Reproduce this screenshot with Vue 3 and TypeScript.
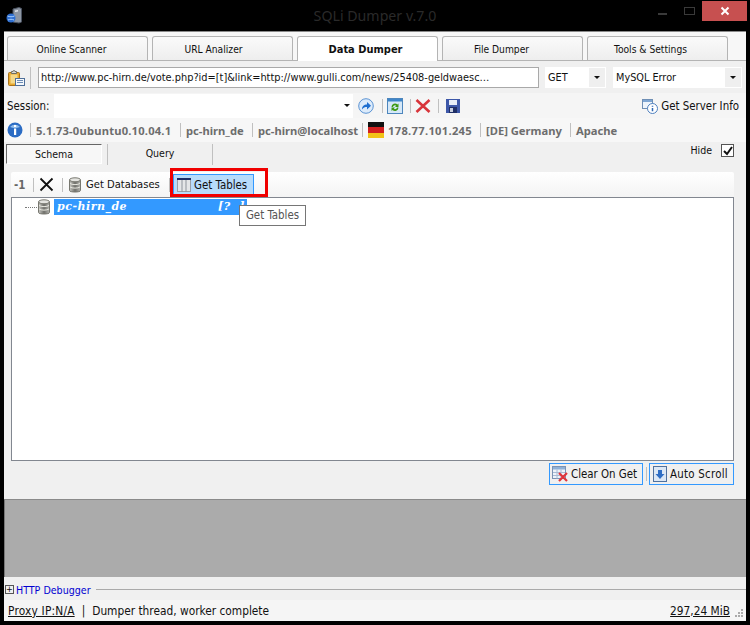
<script setup lang="ts">
const tabs = [
  { label: 'Online Scanner', active: false, shift: 12 },
  { label: 'URL Analizer', active: false, shift: 18 },
  { label: 'Data Dumper', active: true, shift: 4 },
  { label: 'File Dumper', active: false, shift: 22 },
  { label: 'Tools & Settings', active: false, shift: 14 },
]
</script>

<template>
  <div class="window">
    <header class="titlebar">
      <div class="tb-left">
        <svg class="app-icon" width="18" height="18" viewBox="0 0 18 18">
          <path d="M8 3l6-1.500 2.500 1V16l-2.500 1-6-1z" fill="#8d96a3" stroke="#4a5260" />
          <path d="M10 4.500l3-.6v1.500l-3 .6z" fill="#dfe4ea" />
          <circle cx="6" cy="12" r="4.500" fill="#2f6fd0" />
          <path d="M2.500 10c2 1 5 1 7 0M3 14c2-1 4-1 6 0" stroke="#a8d0ff" fill="none" />
        </svg>
      </div>
      <div class="title">SQLi Dumper v.7.0</div>
      <div class="controls">
        <span class="min"></span>
        <span class="max"></span>
        <span class="close">
          <svg width="10" height="10" viewBox="0 0 10 10"><path d="M1.500 1.500l7 7M8.500 1.500l-7 7" stroke="#fff" stroke-width="2" /></svg>
        </span>
      </div>
    </header>

    <main class="client">
      <nav class="tabs">
        <div
          v-for="t in tabs"
          :key="t.label"
          class="tab"
          :class="{ active: t.active }"
          :style="{ paddingRight: t.shift + 'px' }"
        >{{ t.label }}</div>
      </nav>

      <div class="url-row">
        <svg class="paste" width="18" height="18" viewBox="0 0 18 18">
          <rect x="1.500" y="3.500" width="11" height="13" rx="1" fill="#e8a92e" stroke="#a8721a" />
          <rect x="3.500" y="5.500" width="7" height="9" fill="#f5d98a" />
          <path d="M4.500 3.500V2.500h1.500a1 1 0 0 1 2 0h1.500v2h-5z" fill="#d9d9d2" stroke="#6e6e64" />
          <rect x="8.500" y="9.500" width="9" height="7" fill="#f4f8fc" stroke="#4f6f99" />
          <path d="M10 11.500h6M10 13.500h6" stroke="#6c8cb5" />
        </svg>
        <span class="vsep tall"></span>
        <div class="url-input">http://www.pc-hirn.de/vote.php?id=[t]&amp;link=http://www.gulli.com/news/25408-geldwaesc…</div>
        <div class="combo get"><span>GET</span><i class="arrow-box"><b class="arrow"></b></i></div>
        <div class="combo err"><span>MySQL Error</span><i class="arrow-box"><b class="arrow"></b></i></div>
      </div>

      <div class="session-row">
        <span class="session-label">Session:</span>
        <div class="session-input"><b class="arrow"></b></div>
        <svg class="ico go" width="16" height="16" viewBox="0 0 16 16">
          <circle cx="8" cy="8" r="7.300" fill="#dcebfb" stroke="#5b93d3" />
          <path d="M4 11.500c0-3.500 2-5 5-5V4l4 3.700-4 3.700V9c-2 0-3.700.6-5 2.500z" fill="#1f6fd0" />
        </svg>
        <span class="vsep s"></span>
        <svg class="ico" width="16" height="16" viewBox="0 0 16 16">
          <rect x=".5" y=".5" width="15" height="15" fill="#d6e8f8" stroke="#4d86bd" />
          <rect x="1" y="1" width="14" height="2.500" fill="#3f86c9" />
          <path d="M4.500 9a3.500 3.500 0 0 1 6-2.400l1-1v3.400H8l1.200-1.200A2 2 0 0 0 6 9zM11.500 9.500a3.500 3.500 0 0 1-6 2.400l-1 1V9.500H8l-1.200 1.200a2 2 0 0 0 3.200-1.200z" fill="#3f9a12" />
        </svg>
        <span class="vsep s"></span>
        <svg class="ico" width="16" height="16" viewBox="0 0 16 16"><path d="M1.500 2l13 12M14.500 2l-13 12" stroke="#d8343a" stroke-width="2.600" /></svg>
        <span class="vsep s"></span>
        <svg class="ico save" width="14" height="14" viewBox="0 0 14 14">
          <rect width="14" height="14" fill="#3d57a8" />
          <rect x="3" y="1" width="8" height="5" fill="#e8edf7" />
          <rect x="3" y="8" width="8" height="6" fill="#1f2e66" />
          <rect x="4" y="9" width="3" height="4" fill="#c7cede" />
        </svg>
        <div class="server-info">
          <svg width="16" height="16" viewBox="0 0 16 16">
            <rect x=".5" y="1.500" width="10" height="9" fill="#eef4fb" stroke="#6f8fb5" />
            <rect x="1" y="2" width="9" height="2" fill="#7fa6d3" />
            <circle cx="10.500" cy="10.500" r="5" fill="#fff" stroke="#4d7fbe" />
            <path d="M10.500 7.800v1M10.500 10v3.300" stroke="#2f68b5" stroke-width="1.500" />
          </svg>
          <span>Get Server Info</span>
        </div>
      </div>

      <div class="info-row">
        <svg class="info-ico" width="16" height="16" viewBox="0 0 16 16">
          <circle cx="8" cy="8" r="7.500" fill="#2b6cc4" />
          <path d="M3 5a6 5 0 0 1 10 0c-3 1.500-7 1.500-10 0z" fill="#8fbcec" />
          <rect x="7" y="3" width="2.200" height="2" fill="#fff" />
          <rect x="7" y="6.500" width="2.200" height="6.500" fill="#fff" />
        </svg>
        <span class="vsep"></span>
        <span class="info w1">5.1.73-0ubuntu0.10.04.1</span>
        <span class="vsep"></span>
        <span class="info w2">pc-hirn_de</span>
        <span class="vsep"></span>
        <span class="info w3">pc-hirn@localhost</span>
        <span class="vsep"></span>
        <span class="flag"><i class="f1"></i><i class="f2"></i><i class="f3"></i></span>
        <span class="info w4">178.77.101.245</span>
        <span class="vsep"></span>
        <span class="info w5">[DE] Germany</span>
        <span class="vsep"></span>
        <span class="info">Apache</span>
      </div>

      <div class="sub-row">
        <div class="sub-tab schema">Schema</div>
        <span class="vsep high"></span>
        <div class="sub-tab query">Query</div>
        <span class="vsep high"></span>
        <div class="hide">
          <span>Hide</span>
          <span class="check">
            <svg width="10" height="10" viewBox="0 0 10 10"><path d="M1 5l3 3 5-7" fill="none" stroke="#111" stroke-width="2" /></svg>
          </span>
        </div>
      </div>

      <section class="panel">
        <div class="toolbar">
          <span class="count">-1</span>
          <span class="vsep"></span>
          <svg class="x-ico" width="15" height="15" viewBox="0 0 15 15"><path d="M1.500 1.500l12 12M13.500 1.500l-12 12" stroke="#111" stroke-width="1.800" /></svg>
          <span class="vsep after-x"></span>
          <svg class="db" width="12" height="16" viewBox="0 0 12 16">
            <defs>
              <linearGradient id="dbA" x1="0" x2="1" y1="0" y2="0">
                <stop offset="0" stop-color="#c9c9c4" />
                <stop offset=".5" stop-color="#6f6f6a" />
                <stop offset="1" stop-color="#b5b5b0" />
              </linearGradient>
            </defs>
            <path d="M.5 3v10.500c0 2 11 2 11 0V3z" fill="url(#dbA)" stroke="#77776f" />
            <ellipse cx="6" cy="2.800" rx="5.500" ry="2" fill="#e4e4e0" stroke="#77776f" />
            <path d="M1 6.500c2 1.500 8 1.500 10 0M1 10c2 1.500 8 1.500 10 0" stroke="#e8e8e0" fill="none" />
          </svg>
          <span class="tool-label">Get Databases</span>
          <span class="vsep before-tables"></span>
          <div class="get-tables">
            <svg width="14" height="14" viewBox="0 0 14 14">
              <rect x=".5" y=".5" width="13" height="13" fill="#e4e6e8" stroke="#9aa0a8" />
              <rect x="0" y="0" width="14" height="2" fill="#1c2c66" />
              <path d="M5 2v12M9 2v12" stroke="#8e949c" />
            </svg>
            <span>Get Tables</span>
          </div>
          <span class="red-box"></span>
        </div>

        <div class="tree">
          <div class="node">
            <span class="dots"></span>
            <svg class="db" width="12" height="16" viewBox="0 0 12 16">
              <path d="M.5 3v10.500c0 2 11 2 11 0V3z" fill="url(#dbA)" stroke="#77776f" />
              <ellipse cx="6" cy="2.800" rx="5.500" ry="2" fill="#e4e4e0" stroke="#77776f" />
              <path d="M1 6.500c2 1.500 8 1.500 10 0M1 10c2 1.500 8 1.500 10 0" stroke="#e8e8e0" fill="none" />
            </svg>
            <div class="selected"><span>pc-hirn_de</span><span>[?&nbsp;&nbsp;]</span></div>
          </div>
          <div class="tooltip">Get Tables</div>
        </div>

        <div class="actions">
          <div class="action clear">
            <svg width="16" height="16" viewBox="0 0 16 16">
              <rect x=".5" y=".5" width="13" height="12" fill="#eef3f9" stroke="#7b93b3" />
              <rect x="1" y="1" width="12" height="2.500" fill="#8fb0d6" />
              <path d="M1 6.500h12M1 9.500h12M5 3.500v9M9 3.500v9" stroke="#a8bcd4" />
              <path d="M7 7l8 8M15 7l-8 8" stroke="#e0343a" stroke-width="2.200" />
            </svg>
            <span>Clear On Get</span>
          </div>
          <span class="vsep"></span>
          <div class="action scroll">
            <svg width="14" height="16" viewBox="0 0 14 16">
              <rect x=".5" y=".5" width="13" height="15" fill="#dbe7f5" stroke="#50719d" />
              <path d="M5 4h4v4h2.500L7 13 2.500 8H5z" fill="#2f6ec4" />
            </svg>
            <span>Auto Scroll</span>
          </div>
        </div>
      </section>

      <div class="gray-area"></div>

      <div class="debugger">
        <span class="plus">+</span>
        <span class="debug-label">HTTP Debugger</span>
        <span class="debug-line"></span>
      </div>

      <footer class="status">
        <span class="proxy">Proxy IP:N/A</span>
        <span class="pipe">|</span>
        <span>Dumper thread, worker complete</span>
        <span class="mem">297,24 MiB</span>
        <svg class="grip" width="10" height="10" viewBox="0 0 10 10" fill="#aaa">
          <rect x="7" y="1" width="2" height="2" /><rect x="4" y="4" width="2" height="2" /><rect x="7" y="4" width="2" height="2" />
          <rect x="1" y="7" width="2" height="2" /><rect x="4" y="7" width="2" height="2" /><rect x="7" y="7" width="2" height="2" />
        </svg>
      </footer>
    </main>
  </div>
</template>

<style>
html, body { margin: 0; background: #000; }
</style>

<style scoped>
.window {
  width: 750px;
  height: 625px;
  background: #000;
  display: flex;
  flex-direction: column;
  overflow: hidden;
  font-family: "DejaVu Sans", "Noto Sans", sans-serif;
  font-stretch: condensed;
  font-size: 10.5px;
  color: #111;
}
.titlebar {
  height: 31px;
  flex: none;
  display: grid;
  grid-template-columns: 1fr auto 1fr;
  align-items: start;
}
.app-icon { margin: 6px 0 0 5px; }
.title {
  text-align: center;
  color: #2a2a2a;
  font-family: "Noto Sans", sans-serif;
  font-stretch: normal;
  font-size: 14.2px;
  line-height: 32px;
}
.controls { display: flex; align-items: flex-start; justify-content: flex-end; margin-right: 3px; }
.min { width: 9px; height: 2px; background: #3a3a3a; margin: 13px 17px 0 0; }
.max { width: 9px; height: 6px; border: 1px solid #3a3a3a; margin: 7px 7px 0 0; }
.close {
  width: 45px;
  height: 20px;
  margin-top: 1px;
  background: #c75050;
  display: flex;
  align-items: center;
  justify-content: center;
}
.client {
  flex: 1;
  margin: 0 4px 4px;
  width: 742px;
  background: #f0f0f0;
  display: flex;
  flex-direction: column;
  border-top: 1px solid #8a8a8a;
  box-sizing: border-box;
  min-height: 0;
}
.tabs {
  height: 29px;
  flex: none;
  display: flex;
  align-items: flex-end;
  gap: 4px;
  padding-left: 3px;
  background: #f7f7f7;
  border-bottom: 1px solid #b4b4b4;
  box-sizing: border-box;
}
.tab {
  width: 141px;
  height: 24px;
  box-sizing: border-box;
  border: 1px solid #b4b4b4;
  border-bottom: none;
  border-radius: 3px 3px 0 0;
  background: linear-gradient(#fafafa, #eeeeee);
  text-align: center;
  font-size: 10.2px;
  line-height: 25px;
}
.tab.active {
  background: #fff;
  font-weight: 700;
  font-size: 11px;
  height: 25px;
  margin-bottom: -1px;
}
.url-row {
  height: 32px;
  flex: none;
  background: #f0f0f0;
  display: flex;
  align-items: center;
  padding: 1px 0 0 3px;
  box-sizing: border-box;
}
.paste { margin-right: 3px; }
.vsep { width: 1px; height: 14px; background: #c0c0c0; flex: none; margin: 0 5px; }
.vsep.tall { height: 22px; margin: 0 3px 0 2px; }
.vsep.high { height: 21px; margin: 0; }
.vsep.s { margin: 0 4px 0 7px; }
.url-input {
  width: 501px;
  height: 21px;
  margin-left: 4px;
  box-sizing: border-box;
  border: 1px solid #a9a9a9;
  background: #fff;
  font-size: 10.9px;
  line-height: 19px;
  padding-left: 2px;
  white-space: nowrap;
  overflow: hidden;
}
.combo {
  height: 21px;
  background: #fff;
  display: flex;
  align-items: center;
  justify-content: space-between;
  font-size: 10.8px;
  padding-left: 3px;
  box-sizing: border-box;
}
.combo.get { width: 61px; margin-left: 6px; }
.combo.err { width: 129px; margin-left: 7px; }
.arrow-box {
  width: 16px;
  height: 19px;
  background: #efefef;
  margin-right: 1px;
  display: flex;
  align-items: center;
  justify-content: center;
}
.arrow {
  display: block;
  width: 0;
  height: 0;
  border: 3px solid transparent;
  border-top: 3px solid #111;
  border-bottom: none;
}
.session-row {
  height: 25px;
  flex: none;
  display: flex;
  align-items: center;
  padding-left: 3px;
  background: #f5f5f5;
  font-size: 11.4px;
}
.session-label { width: 47px; }
.session-input {
  width: 299px;
  height: 24px;
  background: #fff;
  display: flex;
  align-items: center;
  justify-content: flex-end;
  padding-right: 3px;
  box-sizing: border-box;
}
.go { margin-left: 5px; margin-right: 1px; }
.ico { flex: none; }
.save { margin-left: 3px; }
.server-info {
  margin-left: auto;
  margin-right: 7px;
  display: flex;
  align-items: center;
  gap: 3px;
}
.info-row {
  height: 24px;
  flex: none;
  display: flex;
  align-items: center;
  padding-left: 3px;
  background: #f7f7f7;
  color: #6d6d6d;
  font-family: "Noto Sans", sans-serif;
  font-stretch: normal;
  font-weight: 700;
  font-size: 11.2px;
  white-space: nowrap;
}
.info-ico { margin-right: 2px; }
.w1 { width: 139px; letter-spacing: .2px; }
.w2 { width: 61px; }
.w3 { width: 99px; }
.w4 { width: 87px; letter-spacing: .3px; }
.w5 { width: 79px; }
.flag { width: 16px; height: 16px; display: flex; flex-direction: column; margin-right: 4px; }
.flag i { flex: 1; display: block; }
.f1 { background: #111; }
.f2 { background: #d32020; }
.f3 { background: #f2c318; }
.sub-row {
  height: 24px;
  flex: none;
  display: flex;
  align-items: flex-start;
  padding: 2px 12px 0 2px;
  box-sizing: border-box;
}
.sub-tab { text-align: center; line-height: 19px; box-sizing: border-box; }
.schema {
  width: 96px;
  height: 20px;
  margin-right: 5px;
  border: 1px solid;
  border-color: #666 #fff #fff #666;
  background: #f7f7f7;
}
.query { width: 104px; }
.hide { margin-left: auto; display: flex; align-items: center; gap: 9px; line-height: 13px; }
.check {
  width: 11px;
  height: 11px;
  border: 1px solid #555;
  background: #fff;
  display: flex;
  align-items: center;
  justify-content: center;
}
.panel { flex: none; padding: 6px 12px 0 7px; }
.toolbar {
  height: 25px;
  box-sizing: border-box;
  display: flex;
  align-items: center;
  padding-left: 3px;
  background: linear-gradient(#ffffff, #f4f4f4);
  border-radius: 2px 2px 0 0;
  position: relative;
}
.count { color: #666; font-weight: 700; font-size: 11.4px; width: 14px; flex: none; }
.x-ico { margin-right: 3px; flex: none; }
.vsep.after-x { margin-right: 6px; }
.db { flex: none; }
.tool-label { margin-left: 5px; white-space: nowrap; font-size: 11.1px; width: 74px; flex: none; }
.vsep.before-tables { margin: 0 3px 0 9px; }
.get-tables {
  width: 81px;
  height: 22px;
  box-sizing: border-box;
  border: 1px solid #3399ff;
  background: #b8dcfb;
  display: flex;
  align-items: center;
  gap: 3px;
  padding-left: 3px;
  white-space: nowrap;
  font-size: 11.4px;
  flex: none;
}
.red-box {
  position: absolute;
  left: 159px;
  top: -4px;
  width: 98px;
  height: 29px;
  box-sizing: border-box;
  border: 3px solid #f00000;
}
.tree {
  height: 264px;
  box-sizing: border-box;
  border: 1px solid #828790;
  background: #fff;
  position: relative;
  padding: 1px 0 0 13px;
}
.node { display: flex; align-items: center; height: 16px; }
.dots { width: 12px; border-top: 1px dotted #777; margin-right: 1px; }
.selected {
  width: 193px;
  height: 16px;
  margin-left: 4px;
  padding: 0 2px 0 3px;
  box-sizing: border-box;
  background: #3399ff;
  color: #fff;
  display: flex;
  justify-content: space-between;
  font-family: "DejaVu Serif", serif;
  font-stretch: normal;
  font-weight: 700;
  font-style: italic;
  font-size: 11px;
  letter-spacing: .5px;
  line-height: 16px;
}
.tooltip {
  position: absolute;
  left: 227px;
  top: 7px;
  width: 67px;
  height: 21px;
  box-sizing: border-box;
  border: 1px solid #767676;
  background: #fff;
  color: #555;
  font-size: 11.4px;
  text-align: center;
  line-height: 19px;
}
.actions {
  display: flex;
  justify-content: flex-end;
  align-items: center;
  height: 24px;
  margin-top: 1px;
}
.action {
  height: 22px;
  box-sizing: border-box;
  border: 1px solid #3399ff;
  display: flex;
  align-items: center;
  gap: 3px;
  padding-left: 2px;
  font-size: 11.4px;
  white-space: nowrap;
}
.clear { width: 94px; }
.scroll { width: 85px; padding-left: 3px; letter-spacing: .25px; }
.actions .vsep { margin: 0 2px 0 3px; height: 14px; }
.gray-area {
  height: 78px;
  flex: none;
  margin-top: 13px;
  background: #ababab;
  border-top: 1px solid #8a8a8a;
  border-left: 1px solid #777;
  box-sizing: border-box;
}
.debugger {
  height: 23px;
  flex: none;
  display: flex;
  align-items: center;
  padding: 2px 0 0 1px;
  box-sizing: border-box;
  background: #f0f0f0;
}
.plus {
  width: 7px;
  height: 7px;
  border: 1px solid #555;
  font-size: 9px;
  line-height: 6px;
  text-align: center;
}
.debug-label { color: #0000d0; margin-left: 2px; font-size: 10.6px; }
.debug-line { flex: 1; height: 1px; background: #aaa; margin-left: 5px; }
.status {
  flex: 1;
  display: flex;
  align-items: center;
  padding-left: 4px;
  background: #f5f5f5;
  font-size: 11.8px;
}
.proxy { text-decoration: underline; letter-spacing: .2px; }
.pipe { margin: 0 7px; }
.mem { margin-left: auto; text-decoration: underline; }
.grip { margin: 5px 2px 0 4px; }
</style>
